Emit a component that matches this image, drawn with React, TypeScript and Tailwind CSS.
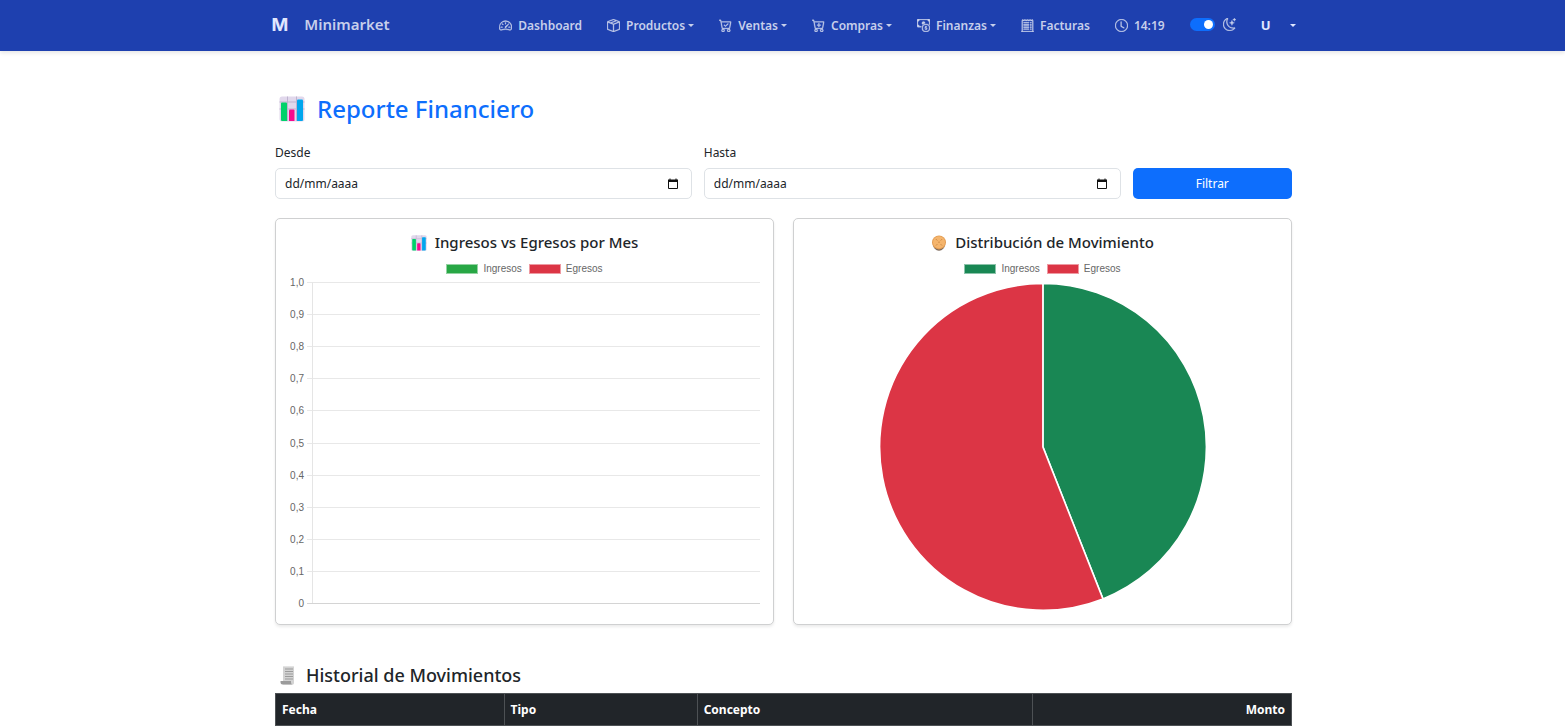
import type { ReactNode } from "react";
import {
  BsBoxSeam,
  BsCartCheck,
  BsCartPlus,
  BsCashCoin,
  BsClock,
  BsMoonStars,
  BsReceiptCutoff,
  BsSpeedometer2,
} from "react-icons/bs";

function Caret() {
  return <span className="ml-[3px] border-x-[3px] border-t-[3px] border-x-transparent border-t-current" />;
}

function NavItem({ icon, label, menu }: { icon: ReactNode; label: string; menu?: boolean }) {
  const content = (
    <>
      <span className="mr-[6px] text-[13px]">{icon}</span>
      {label}
      {menu && <Caret />}
    </>
  );
  return (
    <li>
      {menu ? (
        <button type="button" aria-haspopup="menu" className="flex items-center">
          {content}
        </button>
      ) : (
        <a href="#" className="flex items-center">
          {content}
        </a>
      )}
    </li>
  );
}

function ChartEmoji({ className }: { className: string }) {
  return (
    <svg viewBox="0 0 26 26" className={className} aria-hidden="true">
      <rect x="0.5" y="0.5" width="25" height="25" rx="2.5" fill="#e1d8ec" />
      <path d="M8.5 0.5V25M17.5 0.5V25M0.5 6H25.5M0.5 13H25.5" stroke="#bfb3cf" strokeWidth="1" />
      <path d="M2 7.5a1 1 0 0 1 1-1h4a1 1 0 0 1 1 1V25H3a1 1 0 0 1-1-1z" fill="#00d26a" />
      <path d="M10 14.5a1 1 0 0 1 1-1h3.500a1 1 0 0 1 1 1V25H10z" fill="#f70a8d" />
      <path d="M18 4.500a1 1 0 0 1 1-1h4a1 1 0 0 1 1 1V24a1 1 0 0 1-1 1h-5z" fill="#00a6ed" />
    </svg>
  );
}

function CoinEmoji() {
  return (
    <svg viewBox="0 0 16 16" className="size-4" aria-hidden="true">
      <ellipse cx="8" cy="9" rx="6" ry="6.700" fill="#7d6a5c" />
      <ellipse cx="8" cy="7.400" rx="7" ry="7" fill="#e39d54" />
      <ellipse cx="8" cy="7.300" rx="6" ry="6" fill="#f5b56d" />
      <path
        d="M5 4.200l1.300 1.300M11 4.200L9.700 5.500M8 6.500v1.500M5 10.500l1.300-1.300M11 10.500L9.700 9.200"
        stroke="#c98743"
        strokeWidth="1"
      />
    </svg>
  );
}

function ScrollEmoji() {
  return (
    <svg viewBox="0 0 16 20" className="h-5 w-4" aria-hidden="true">
      <path d="M3 1l1 .7 1-.7 1 .7 1-.7 1 .7 1-.7 1 .7 1-.7 1 .7 1-.7 1 .7V18a1.500 1.500 0 0 1-1.500 1.500H3z" fill="#d3d3d3" />
      <path d="M5 4h8M5 6.500h8M5 9h8M5 11.500h8M5 14h8" stroke="#9b9b9b" strokeWidth="1" />
      <path d="M0.500 16h10.500v1.500a2 2 0 0 0 2 2H2.500a2 2 0 0 1-2-2z" fill="#9b9b9b" />
    </svg>
  );
}

function CalendarIcon() {
  return (
    <svg viewBox="0 0 12 12" className="h-3 w-3" aria-hidden="true">
      <path d="M1.500 3.500v7h9v-7" fill="none" stroke="#111" strokeWidth="1" />
      <path d="M1 1.500h1.500V0.500h1v1h5v-1h1v1H11V4H1z" fill="#111" />
    </svg>
  );
}

function DateField({ id, label }: { id: string; label: string }) {
  return (
    <div className="col-span-5">
      <label htmlFor={id} className="mb-[6px] block leading-[19px]">
        {label}
      </label>
      <div className="flex h-[31px] items-center rounded-[5px] border border-[#dee2e6] bg-white pl-[9px] pr-3">
        <input
          id={id}
          type="text"
          inputMode="numeric"
          placeholder="dd/mm/aaaa"
          className="min-w-0 flex-1 bg-transparent outline-none placeholder:text-[#212529]"
        />
        <button type="button" aria-label={"Abrir calendario: " + label}>
          <CalendarIcon />
        </button>
      </div>
    </div>
  );
}

function LegendItem({ swatch, label }: { swatch: string; label: string }) {
  return (
    <li className="flex items-center gap-[5px]">
      <span className={"h-[10px] w-8 border border-white/50 " + swatch} />
      {label}
    </li>
  );
}

function ChartCard({
  icon,
  title,
  green,
  red,
  children,
}: {
  icon: ReactNode;
  title: string;
  green: string;
  red: string;
  children: ReactNode;
}) {
  return (
    <section className="flex flex-col rounded-[5px] border border-[#cfd0d1] bg-white px-3 pb-[13px] pt-3 shadow-[0_2px_3px_rgba(0,0,0,0.08)]">
      <h2 className="flex items-center justify-center gap-2 text-[15px] font-medium leading-[23px]">
        {icon}
        {title}
      </h2>
      <ul className="mt-[9px] flex justify-center gap-[7px] font-['Liberation_Sans',Arial,sans-serif] text-[10px] leading-[12px] text-[#666]">
        <LegendItem swatch={green} label="Ingresos" />
        <LegendItem swatch={red} label="Egresos" />
      </ul>
      {children}
    </section>
  );
}

const TICKS = ["1,0", "0,9", "0,8", "0,7", "0,6", "0,5", "0,4", "0,3", "0,2", "0,1", "0"];

function BarChart() {
  return (
    <svg viewBox="0 0 473 334" className="w-full" role="img" aria-label="Ingresos vs Egresos por Mes">
      {TICKS.map((t, i) => {
        const y = 7.5 + Math.round(i * 32.1);
        return (
          <g key={t}>
            <path d={`M19 ${y}H472`} stroke={i === 10 ? "#d4d4d4" : "#e8e8e8"} strokeWidth="1" />
            <text x="16" y={y + 3} textAnchor="end" fontSize="10" fill="#666" fontFamily="Liberation Sans, Arial, sans-serif">
              {t}
            </text>
          </g>
        );
      })}
      <path d="M24.500 7.500V328" stroke="#e5e5e5" strokeWidth="1" />
    </svg>
  );
}

function PieChart() {
  return (
    <svg viewBox="0 0 328 328" className="mx-auto mt-2 w-[69.3%]" role="img" aria-label="Distribución de Movimiento">
      <g stroke="#fff" strokeWidth="1.600" strokeLinejoin="round">
        <path d="M164 164V0.500A163.500 163.500 0 0 1 224.100 316.100Z" fill="#198754" />
        <path d="M164 164L224.100 316.100A163.500 163.500 0 1 1 164 0.500Z" fill="#dc3545" />
      </g>
    </svg>
  );
}

export default function App() {
  return (
    <div className="min-h-screen bg-white font-['Noto_Sans','Open_Sans',sans-serif] text-[12px] text-[#212529]">
      <header className="bg-[#1e40af] pl-0.5 text-[#c7cfeb] shadow-[0_2px_4px_rgba(0,0,0,0.1)]">
        <nav className="mx-auto flex h-[51px] max-w-[1024px] items-center justify-between font-semibold">
          <a href="#" className="flex items-center gap-4 pb-0.5 text-[15px]">
            <span className="font-['Inter',sans-serif] text-[18px] font-bold text-[#e0e7ff]">M</span>
            Minimarket
          </a>
          <ul className="flex items-center gap-[25px] [&_svg]:stroke-[0.4]">
            <NavItem icon={<BsSpeedometer2 />} label="Dashboard" />
            <NavItem icon={<BsBoxSeam />} label="Productos" menu />
            <NavItem icon={<BsCartCheck />} label="Ventas" menu />
            <NavItem icon={<BsCartPlus />} label="Compras" menu />
            <NavItem icon={<BsCashCoin />} label="Finanzas" menu />
            <NavItem icon={<BsReceiptCutoff />} label="Facturas" />
            <li className="flex items-center">
              <BsClock className="mr-[6px] text-[13px]" />
              14:19
            </li>
            <li className="pb-0.5">
              <label className="flex items-center gap-2">
                <input
                  type="checkbox"
                  role="switch"
                  defaultChecked
                  aria-label="Modo oscuro"
                  className="flex h-[13px] w-[25px] appearance-none items-center rounded-full bg-[#0d6efd] px-[2px] before:size-[9px] before:rounded-full before:bg-white checked:justify-end"
                />
                <BsMoonStars className="text-[13px]" />
              </label>
            </li>
            <li>
              <button type="button" aria-label="Usuario U" className="flex items-center gap-4 text-[13px] font-bold text-[#e0e7ff]">
                U
                <Caret />
              </button>
            </li>
          </ul>
        </nav>
      </header>

      <main className="pl-0.5">
        <div className="mx-auto max-w-[1017px] pt-[39px]">
          <h1 className="flex items-center gap-3 pl-1 text-[24px] font-medium leading-[38px] text-[#0d6efd]">
            <ChartEmoji className="size-[26px]" />
            Reporte Financiero
          </h1>

          <form className="mt-[15px] grid grid-cols-12 items-end gap-3">
            <DateField id="desde" label="Desde" />
            <DateField id="hasta" label="Hasta" />
            <button type="button" className="col-span-2 h-[31px] rounded-[5px] bg-[#0d6efd] text-white">
              Filtrar
            </button>
          </form>

          <div className="mt-[19px] grid grid-cols-2 gap-[19px]">
            <ChartCard
              icon={<ChartEmoji className="size-4" />}
              title="Ingresos vs Egresos por Mes"
              green="bg-[#28a745]"
              red="bg-[#dc3545]"
            >
              <BarChart />
            </ChartCard>
            <ChartCard icon={<CoinEmoji />} title="Distribución de Movimiento" green="bg-[#198754]" red="bg-[#dc3545]">
              <PieChart />
            </ChartCard>
          </div>

          <h2 className="mt-[37px] flex items-center gap-[10px] pl-[5px] text-[18px] font-medium leading-[26px]">
            <ScrollEmoji />
            Historial de Movimientos
          </h2>
          <table className="mt-[5px] w-full table-fixed border-collapse bg-[#212529] text-left text-white">
            <thead>
              <tr className="h-8 *:border *:border-[#4d5154] *:px-[6px] *:pt-0.5 *:font-bold">
                <th scope="col" className="w-[22.5%]">Fecha</th>
                <th scope="col" className="w-[19%]">Tipo</th>
                <th scope="col" className="w-[33%]">Concepto</th>
                <th scope="col" className="text-right">Monto</th>
              </tr>
            </thead>
          </table>
        </div>
      </main>
    </div>
  );
}
